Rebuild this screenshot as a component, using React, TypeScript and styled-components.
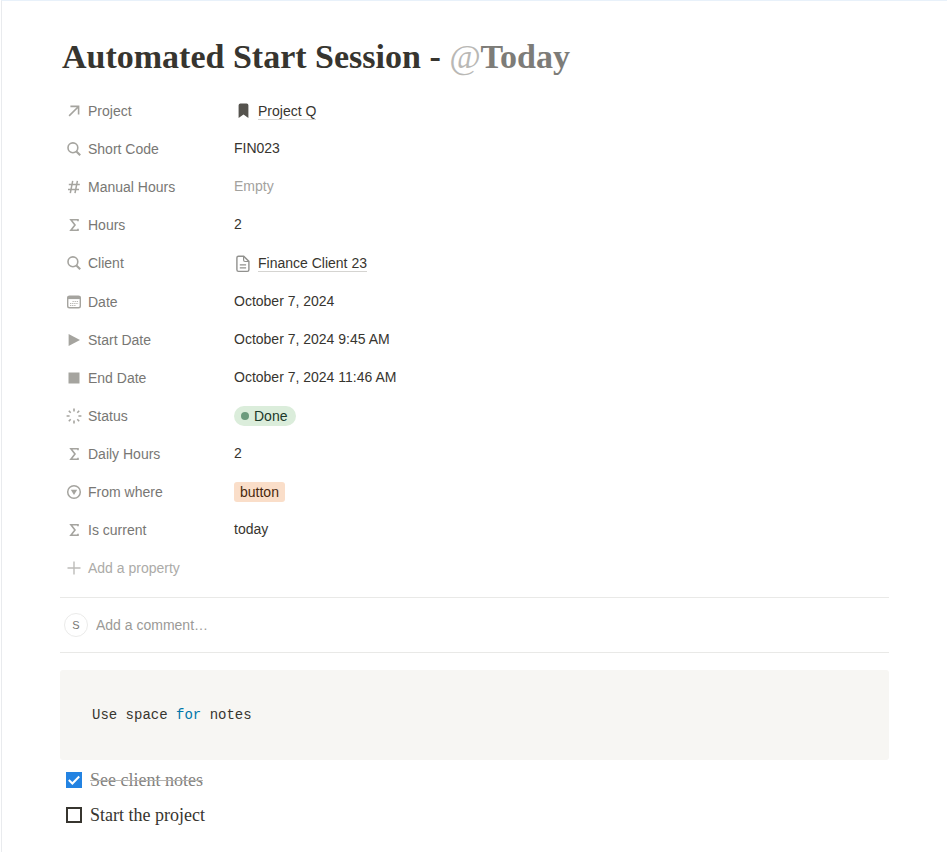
import React from "react";
import styled, { createGlobalStyle, css } from "styled-components";

const GlobalStyle = createGlobalStyle`
  *, *::before, *::after { box-sizing: border-box; }
  body { margin: 0; background: #ffffff; }
`;

const sans = `"Liberation Sans", Arial, sans-serif`;
const serif = `"Liberation Serif", "Times New Roman", serif`;
const mono = `"Liberation Mono", "Courier New", monospace`;

const Page = styled.main`
  min-height: 100vh;
  margin-left: 1px;
  padding: 36px 58px 16px;
  border-top: 1px solid #e8f1fa;
  border-left: 1px solid #e9ebee;
  color: #37352f;
  font-family: ${sans};
  font-size: 14px;
  line-height: 20px;
`;

const Title = styled.h1`
  margin: 0 0 17px;
  padding: 0 2px;
  font-family: ${serif};
  font-size: 34px;
  font-weight: 700;
  line-height: 40px;
`;

const Mention = styled.span`
  color: #7d7c78;
`;

const At = styled.span`
  color: #b9b8b5;
  font-style: italic;
  font-weight: 400;
`;

const Properties = styled.dl`
  display: flex;
  flex-direction: column;
  gap: 4px;
  margin: 0 0 4px;
`;

const Property = styled.div`
  display: grid;
  grid-template-columns: 168px 1fr;
  column-gap: 6px;
  align-items: start;
`;

const iconRow = css`
  display: flex;
  align-items: center;
  gap: 6px;
  height: 34px;
  padding-left: 6px;
`;

const Label = styled.dt`
  ${iconRow}
  color: #787774;
`;

const Value = styled.dd<{ $raised?: boolean; $tall?: boolean; $muted?: boolean }>`
  display: flex;
  align-items: center;
  margin: 0;
  min-height: ${(p) => (p.$tall ? 35 : 34)}px;
  padding-bottom: ${(p) => (p.$raised ? 2 : 0)}px;
  color: ${(p) => (p.$muted ? "#a3a29e" : "#37352f")};
`;

const PageLink = styled.a`
  display: flex;
  align-items: center;
  gap: 6px;
  color: inherit;
  text-decoration: none;
`;

const LinkText = styled.span`
  border-bottom: 1px solid #d5d4d1;
  line-height: 16px;
`;

const StatusPill = styled.span`
  display: flex;
  align-items: center;
  gap: 5px;
  height: 20px;
  padding: 0 9px 0 7px;
  border-radius: 10px;
  background: #dbeddb;
  color: #1c3829;
`;

const Dot = styled.span`
  width: 8px;
  height: 8px;
  border-radius: 50%;
  background: #6c9b7d;
`;

const Tag = styled.span`
  height: 20px;
  padding: 0 6px;
  border-radius: 3px;
  background: #fadec9;
  color: #49290e;
`;

const AddProperty = styled.button`
  ${iconRow}
  padding-right: 6px;
  border: 0;
  background: none;
  color: #acaba8;
  font: inherit;
  cursor: pointer;
`;

const IconBox = styled.svg`
  flex: none;
  width: 16px;
  height: 16px;
  fill: none;
  stroke: #a5a49f;
  stroke-width: 1.6;
`;

const CommentBar = styled.label`
  display: flex;
  align-items: center;
  gap: 8px;
  height: 56px;
  margin-top: 12px;
  padding: 0 4px;
  border-top: 1px solid #e9e9e7;
  border-bottom: 1px solid #e9e9e7;
`;

const Avatar = styled.span`
  display: grid;
  place-items: center;
  width: 24px;
  height: 24px;
  border: 1px solid #ebebea;
  border-radius: 50%;
  color: #787774;
  font-size: 11px;
`;

const CommentInput = styled.input`
  flex: 1;
  min-width: 0;
  padding: 0;
  border: 0;
  outline: 0;
  background: none;
  color: inherit;
  font: inherit;
  &::placeholder {
    color: #9b9a97;
    opacity: 1;
  }
`;

const CodeBlock = styled.pre`
  margin: 17px 0 0;
  padding: 35px 32px;
  border-radius: 3px;
  background: #f7f6f3;
  font-family: ${mono};
  font-size: 14px;
  line-height: 20px;
  overflow-x: auto;
  code { font: inherit; }
`;

const Keyword = styled.span`
  color: #0077aa;
`;

const TodoList = styled.ul`
  display: flex;
  flex-direction: column;
  gap: 9px;
  margin: 7px 0 0;
  padding: 0 6px;
  list-style: none;
`;

const TodoLabel = styled.label`
  display: flex;
  align-items: center;
  gap: 8px;
  font-family: ${serif};
  font-size: 18px;
  line-height: 26px;
`;

const TodoText = styled.span<{ $done: boolean }>`
  color: ${(p) => (p.$done ? "#83827e" : "#37352f")};
  text-decoration: ${(p) => (p.$done ? "line-through #b5b4b1 1px" : "none")};
`;

const CheckHolder = styled.span`
  display: grid;
  width: 16px;
  height: 16px;
  > * { grid-area: 1 / 1; }
`;

const CheckBox = styled.input`
  appearance: none;
  width: 16px;
  height: 16px;
  margin: 0;
  border: 2px solid #37352f;
  background: #ffffff;
  &:checked {
    border: 0;
    background: #2383e2;
  }
  & + svg { visibility: hidden; }
  &:checked + svg { visibility: visible; }
`;

const CheckMark = styled.svg`
  width: 16px;
  height: 16px;
  fill: none;
  stroke: #ffffff;
  stroke-width: 2;
  pointer-events: none;
`;

type IconName =
  | "arrow" | "search" | "hash" | "sigma" | "calendar" | "play"
  | "stop" | "spinner" | "select" | "plus";

const drawings: Record<IconName, React.ReactNode> = {
  arrow: <path d="M3.1 12.9 12.3 3.7M4.4 3.4h8.2v8.2" />,
  search: (
    <>
      <circle cx="6.9" cy="6.8" r="4.9" />
      <path d="m10.4 10.4 3.8 3.8" strokeWidth="2.1" />
    </>
  ),
  hash: <path d="M6.7 1.8 4.3 14.2M11.4 1.8 9 14.2M2.8 5.6h11M2 10.4h11" strokeWidth="1.5" />,
  sigma: <path d="M12 4.2V2.7H4.9L9 8l-4.1 5.3H12v-1.5" />,
  calendar: (
    <>
      <rect x="1.7" y="2.2" width="12.6" height="11.6" rx="1.8" strokeWidth="1.4" />
      <path d="M1.7 3.7h12.6" strokeWidth="2.8" />
      <path d="M6.5 7.5h6M4 9.5h8.5M4 11.5h6" strokeWidth="1" strokeDasharray="1.3 .8" opacity=".8" />
    </>
  ),
  play: <path d="M2.6 2v12L14 8z" fill="#a5a49f" stroke="none" />,
  stop: <path d="M2.5 2.5h11v11h-11z" fill="#a5a49f" stroke="none" />,
  spinner: (
    <path d="M8 .6v3M8 12.4v3M.6 8h3M12.4 8h3M2.8 2.8l1.9 1.9M11.3 11.3l1.9 1.9M13.2 2.8l-1.9 1.9M4.7 11.3l-1.9 1.9" />
  ),
  select: (
    <>
      <circle cx="8" cy="8" r="6.3" strokeWidth="1.5" />
      <path d="M4.8 5.8h6.4L8 11z" fill="#a5a49f" stroke="none" />
    </>
  ),
  plus: <path d="M8 1.5v13M1.5 8h13" stroke="#bdbcb9" strokeWidth="1.4" />,
};

const Icon = ({ name }: { name: IconName }) => (
  <IconBox viewBox="0 0 16 16" aria-hidden="true">{drawings[name]}</IconBox>
);

const PageIconBox = styled.svg`
  flex: none;
  width: 18px;
  height: 18px;
  fill: none;
`;

const BookmarkIcon = () => (
  <PageIconBox viewBox="0 0 18 18" aria-hidden="true">
    <path d="M4.6 3.2Q4.6 1.4 6.4 1.4h6.2Q14.4 1.4 14.4 3.2V16L9.5 12.6 4.6 16z" fill="#55534e" />
  </PageIconBox>
);

const DocumentIcon = () => (
  <PageIconBox viewBox="0 0 18 18" aria-hidden="true" stroke="#91918e" strokeWidth="1.4">
    <path d="M4.5 1.2h5.2l5.2 5.2v8.4q0 1.6-1.6 1.6H4.5q-1.6 0-1.6-1.6V2.8q0-1.6 1.6-1.6z" />
    <path d="M9.6 1.3v3.7q0 1.5 1.5 1.5h3.8M5.8 9.9h6.3M5.8 12.9h6.3" strokeWidth="1.2" />
  </PageIconBox>
);

interface RowProps {
  icon: IconName;
  label: string;
  raised?: boolean;
  tall?: boolean;
  muted?: boolean;
  children: React.ReactNode;
}

const Row = ({ icon, label, raised = true, tall, muted, children }: RowProps) => (
  <Property>
    <Label><Icon name={icon} />{label}</Label>
    <Value $raised={raised} $tall={tall} $muted={muted}>{children}</Value>
  </Property>
);

const Todo = ({ text, done = false }: { text: string; done?: boolean }) => {
  const [checked, setChecked] = React.useState(done);
  return (
    <li>
      <TodoLabel>
        <CheckHolder>
          <CheckBox type="checkbox" checked={checked} onChange={(e) => setChecked(e.target.checked)} />
          <CheckMark viewBox="0 0 16 16" aria-hidden="true"><path d="m2.8 8 3.6 3.5 6.8-7" /></CheckMark>
        </CheckHolder>
        <TodoText $done={checked}>{text}</TodoText>
      </TodoLabel>
    </li>
  );
};

export default function App() {
  return (
    <>
      <GlobalStyle />
      <Page>
        <Title>Automated Start Session - <Mention><At>@</At>Today</Mention></Title>
        <Properties>
          <Row icon="arrow" label="Project" raised={false}>
            <PageLink href="#project-q"><BookmarkIcon /><LinkText>Project Q</LinkText></PageLink>
          </Row>
          <Row icon="search" label="Short Code">FIN023</Row>
          <Row icon="hash" label="Manual Hours" muted>Empty</Row>
          <Row icon="sigma" label="Hours">2</Row>
          <Row icon="search" label="Client" raised={false} tall>
            <PageLink href="#finance-client-23"><DocumentIcon /><LinkText>Finance Client 23</LinkText></PageLink>
          </Row>
          <Row icon="calendar" label="Date">October 7, 2024</Row>
          <Row icon="play" label="Start Date">October 7, 2024 9:45 AM</Row>
          <Row icon="stop" label="End Date">October 7, 2024 11:46 AM</Row>
          <Row icon="spinner" label="Status" raised={false}><StatusPill><Dot />Done</StatusPill></Row>
          <Row icon="sigma" label="Daily Hours">2</Row>
          <Row icon="select" label="From where" raised={false}><Tag>button</Tag></Row>
          <Row icon="sigma" label="Is current">today</Row>
        </Properties>
        <AddProperty type="button"><Icon name="plus" />Add a property</AddProperty>
        <CommentBar>
          <Avatar>S</Avatar>
          <CommentInput type="text" placeholder="Add a comment…" aria-label="Add a comment" />
        </CommentBar>
        <CodeBlock><code>Use space <Keyword>for</Keyword> notes</code></CodeBlock>
        <TodoList>
          <Todo text="See client notes" done />
          <Todo text="Start the project" />
        </TodoList>
      </Page>
    </>
  );
}
